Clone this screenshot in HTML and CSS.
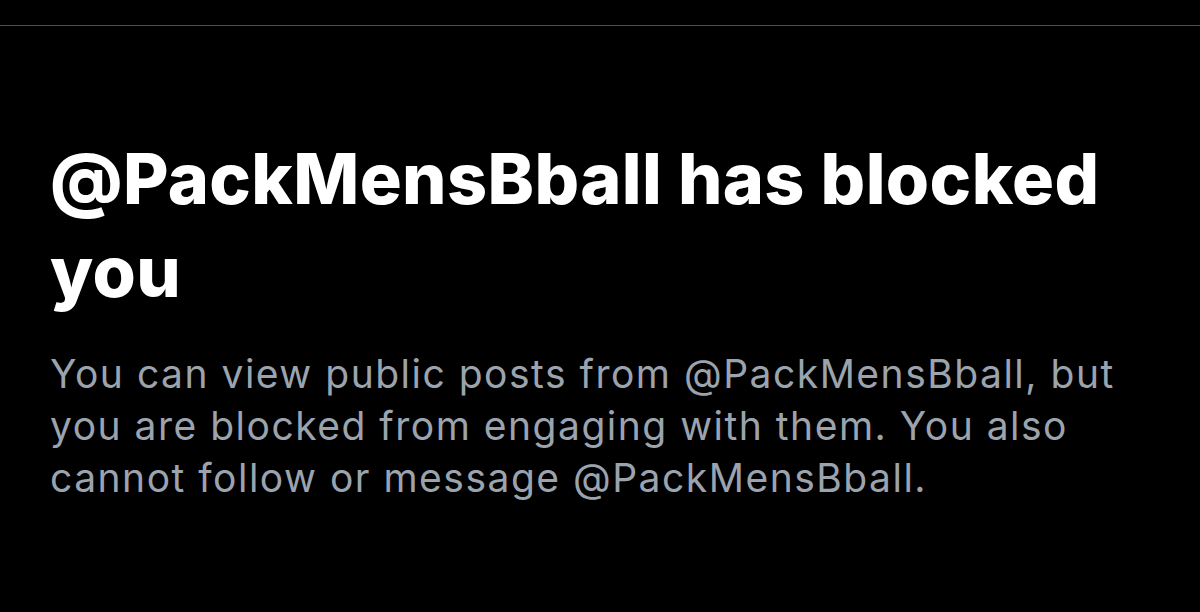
FILE: index.html
```html
<!DOCTYPE html>
<html>
<head>
<meta charset="utf-8">
<link rel="stylesheet" href="styles.css">
</head>
<body>
<div class="page">
  <div class="topbar"></div>
  <div class="content">
    <h1 class="title">@PackMensBball has blocked you</h1>
    <p class="desc">You can view public posts from @PackMensBball, but you are blocked from engaging with them. You also cannot follow or message @PackMensBball.</p>
  </div>
</div>
</body>
</html>
```
FILE: styles.css
```css
html, body {
  margin: 0;
  padding: 0;
  background: #000;
}
.page {
  width: 1200px;
  height: 612px;
  overflow: hidden;
  background: #000;
}
.topbar {
  height: 25px;
  border-bottom: 1px solid #4d4d4d;
}
.content {
  padding: 106px 50px 0 50px;
}
.title {
  margin: 0;
  font-family: Inter, "Liberation Sans", sans-serif;
  font-weight: 800;
  font-size: 70px;
  line-height: 93px;
  letter-spacing: 0.4px;
  color: #fff;
  max-width: 1100px;
}
.desc {
  margin: 30px 0 0 0;
  font-family: Inter, "Liberation Sans", sans-serif;
  font-size: 39px;
  line-height: 52px;
  letter-spacing: 1.5px;
  color: #9ba4ae;
  max-width: 1100px;
}
```
